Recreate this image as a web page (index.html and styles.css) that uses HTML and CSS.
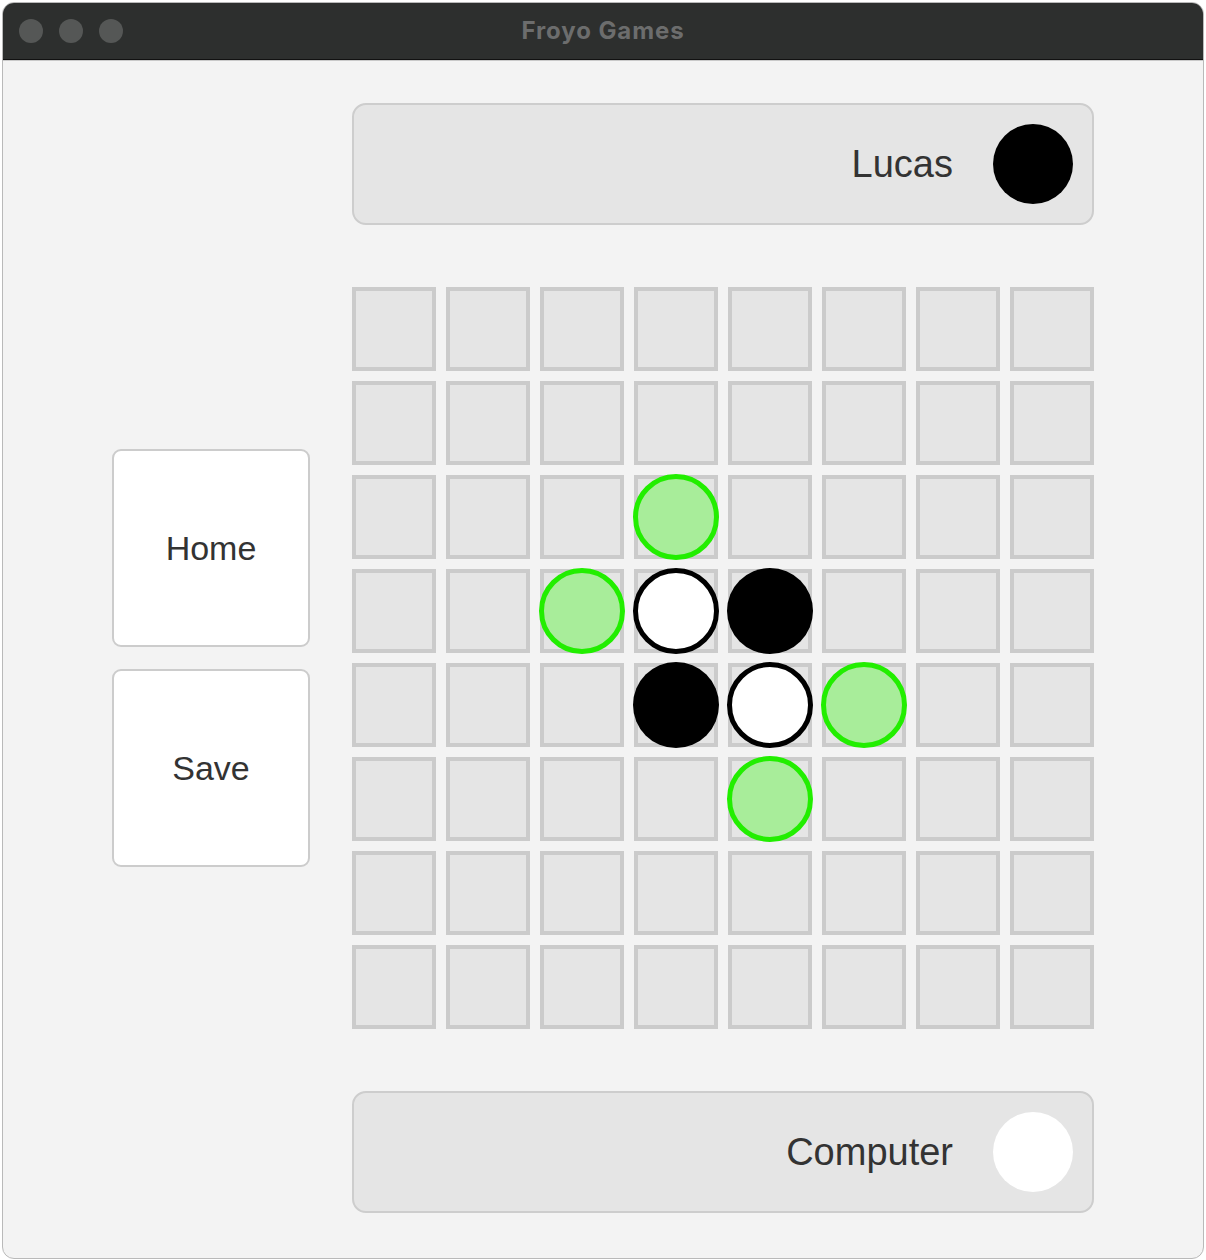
FILE: index.html
```html
<!DOCTYPE html>
<html lang="en">
<head>
<meta charset="utf-8">
<title>Froyo Games</title>
<link rel="stylesheet" href="styles.css">
</head>
<body>
<div class="window">
  <div class="titlebar">
    <div class="lights">
      <span class="light"></span><span class="light"></span><span class="light"></span>
    </div>
    <div class="title">Froyo Games</div>
  </div>
  <div class="content">
    <div class="layout">
      <div class="player top">
        <span class="name">Lucas</span>
        <span class="disc black"></span>
      </div>
      <div class="side">
        <button class="btn">Home</button>
        <button class="btn">Save</button>
      </div>
      <div class="board">
        <div class="cell"></div><div class="cell"></div><div class="cell"></div><div class="cell"></div><div class="cell"></div><div class="cell"></div><div class="cell"></div><div class="cell"></div>
        <div class="cell"></div><div class="cell"></div><div class="cell"></div><div class="cell"></div><div class="cell"></div><div class="cell"></div><div class="cell"></div><div class="cell"></div>
        <div class="cell"></div><div class="cell"></div><div class="cell"></div><div class="cell"><span class="piece hint"></span></div><div class="cell"></div><div class="cell"></div><div class="cell"></div><div class="cell"></div>
        <div class="cell"></div><div class="cell"></div><div class="cell"><span class="piece hint"></span></div><div class="cell"><span class="piece white"></span></div><div class="cell"><span class="piece black"></span></div><div class="cell"></div><div class="cell"></div><div class="cell"></div>
        <div class="cell"></div><div class="cell"></div><div class="cell"></div><div class="cell"><span class="piece black"></span></div><div class="cell"><span class="piece white"></span></div><div class="cell"><span class="piece hint"></span></div><div class="cell"></div><div class="cell"></div>
        <div class="cell"></div><div class="cell"></div><div class="cell"></div><div class="cell"></div><div class="cell"><span class="piece hint"></span></div><div class="cell"></div><div class="cell"></div><div class="cell"></div>
        <div class="cell"></div><div class="cell"></div><div class="cell"></div><div class="cell"></div><div class="cell"></div><div class="cell"></div><div class="cell"></div><div class="cell"></div>
        <div class="cell"></div><div class="cell"></div><div class="cell"></div><div class="cell"></div><div class="cell"></div><div class="cell"></div><div class="cell"></div><div class="cell"></div>
      </div>
      <div class="player bottom">
        <span class="name">Computer</span>
        <span class="disc whitedisc"></span>
      </div>
    </div>
  </div>
</div>
</body>
</html>
```
FILE: styles.css
```css
* { box-sizing: border-box; }
html, body { margin: 0; padding: 0; background: #ffffff; }
body { padding: 2px 2px 1px 2px; font-family: "Liberation Sans", Arial, sans-serif; }

.window {
  width: 1202px;
  height: 1257px;
  border: 1px solid #b9b9b9;
  border-radius: 12px;
  overflow: hidden;
  background: #f3f3f3;
  display: flex;
  flex-direction: column;
}

.titlebar {
  height: 57px;
  flex: none;
  background: #2d2f2e;
  border-bottom: 1px solid #111111;
  display: flex;
  align-items: center;
  position: relative;
}
.lights { display: flex; gap: 16px; padding-left: 16px; }
.light { width: 24px; height: 24px; border-radius: 50%; background: #555756; display: block; }
.title {
  position: absolute;
  left: 0; right: 0; top: 0; bottom: 0;
  display: flex; align-items: center; justify-content: center;
  font-family: "Inter", "Liberation Sans", sans-serif;
  font-weight: 700;
  font-size: 24px;
  letter-spacing: 0.9px;
  color: #6c6d6d;
  padding-bottom: 2px;
}

.content {
  flex: 1;
  padding: 42px 109px 0 109px;
  border-top: 1px solid #c9c9c9;
}
.layout {
  display: grid;
  grid-template-columns: 198px 742px;
  grid-template-rows: 122px 742px 122px;
  column-gap: 42px;
  row-gap: 62px;
}

.player {
  grid-column: 2;
  background: #e5e5e5;
  border: 2px solid #cdcdcd;
  border-radius: 14px;
  display: flex;
  align-items: center;
  justify-content: flex-end;
  gap: 40px;
  padding: 0 19px;
}
.player.top { grid-row: 1; }
.player.bottom { grid-row: 3; }
.name { font-size: 38px; color: #333333; padding-top: 1px; }
.disc { width: 80px; height: 80px; border-radius: 50%; display: block; }
.disc.black { background: #000000; }
.disc.whitedisc { background: #ffffff; }

.side {
  grid-column: 1;
  grid-row: 2;
  display: flex;
  flex-direction: column;
  justify-content: center;
  gap: 22px;
}
.btn {
  width: 198px;
  height: 198px;
  background: #ffffff;
  border: 2px solid #cccccc;
  border-radius: 9px;
  font-family: "Liberation Sans", Arial, sans-serif;
  font-size: 34px;
  color: #333333;
  padding: 0;
}

.board {
  grid-column: 2;
  grid-row: 2;
  display: grid;
  grid-template-columns: repeat(8, 84px);
  grid-template-rows: repeat(8, 84px);
  gap: 10px;
}
.cell {
  background: #e5e5e5;
  border: 4px solid #cbcbcb;
  display: flex;
  align-items: center;
  justify-content: center;
}
.piece {
  flex: none;
  width: 86px;
  height: 86px;
  border-radius: 50%;
  display: block;
}
.piece.black { background: #000000; }
.piece.white { background: #ffffff; border: 5px solid #000000; }
.piece.hint { background: #a8ed9a; border: 5px solid #22ee00; }
```
